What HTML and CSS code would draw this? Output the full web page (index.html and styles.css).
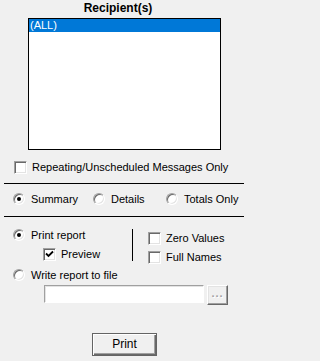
FILE: index.html
```html
<!DOCTYPE html>
<html>
<head>
<meta charset="utf-8">
<link rel="stylesheet" href="styles.css">
</head>
<body>
<div class="dlg">
  <div class="title">Recipient(s)</div>
  <div class="list"><div class="item sel">(ALL)</div></div>
  <div class="opt repeat"><span class="cb"></span><span class="lbl">Repeating/Unscheduled Messages Only</span></div>
  <div class="sep"></div>
  <div class="radios">
    <div class="opt r-sum"><span class="rb on"></span><span class="lbl">Summary</span></div>
    <div class="opt r-det"><span class="rb"></span><span class="lbl">Details</span></div>
    <div class="opt r-tot"><span class="rb"></span><span class="lbl">Totals Only</span></div>
  </div>
  <div class="sep"></div>
  <div class="print-opts">
    <div class="col-left">
      <div class="opt"><span class="rb on"></span><span class="lbl">Print report</span></div>
      <div class="opt preview"><span class="cb"><svg width="11" height="11" viewBox="0 0 11 11"><path d="M2 4.5 L4.5 7 L9 2.5" fill="none" stroke="#000" stroke-width="1.8"/></svg></span><span class="lbl">Preview</span></div>
    </div>
    <div class="vline"></div>
    <div class="col-right">
      <div class="opt zero"><span class="cb"></span><span class="lbl">Zero Values</span></div>
      <div class="opt full"><span class="cb"></span><span class="lbl">Full Names</span></div>
    </div>
  </div>
  <div class="opt write"><span class="rb"></span><span class="lbl">Write report to file</span></div>
  <div class="file-row">
    <div class="input"></div>
    <div class="btn-dots"><span>...</span></div>
  </div>
  <div class="actions"><div class="btn-print">Print</div></div>
</div>
</body>
</html>
```
FILE: styles.css
```css
html, body {
  margin: 0;
  padding: 0;
  background: #f0f0f0;
}
.dlg {
  width: 249px;
  height: 361px;
  background: #f0f0f0;
  font-family: "Liberation Sans", Arial, sans-serif;
  font-size: 11px;
  color: #000;
  overflow: hidden;
}
.title {
  height: 18px;
  line-height: 17px;
  text-align: center;
  font-weight: bold;
  font-size: 12px;
  padding-right: 13px;
}
.list {
  margin-left: 28px;
  width: 193px;
  height: 132px;
  box-sizing: border-box;
  border: 1px solid #000;
  background: #fff;
}
.item {
  height: 13px;
  line-height: 13px;
  padding-left: 1px;
}
.sel {
  background: #0078d7;
  color: #fff;
}
.opt {
  display: flex;
  align-items: center;
  white-space: nowrap;
}
.cb {
  flex: none;
  width: 13px;
  height: 13px;
  box-sizing: border-box;
  border: 1px solid;
  border-color: #a0a0a0 #fff #fff #a0a0a0;
  box-shadow: inset 1px 1px #696969, inset -1px -1px #e3e3e3;
  background: #fff;
  display: flex;
  align-items: center;
  justify-content: center;
}
.cb svg { display: block; }
.rb {
  flex: none;
  position: relative;
  width: 12px;
  height: 12px;
  box-sizing: border-box;
  border-radius: 50%;
  border: 1px solid;
  border-color: #a0a0a0 #fff #fff #a0a0a0;
  box-shadow: inset 1px 1px #696969, inset -1px -1px #e3e3e3;
  background: #fff;
}
.rb.on::after {
  content: "";
  position: absolute;
  left: 3px;
  top: 3px;
  width: 4px;
  height: 4px;
  border-radius: 50%;
  background: #000;
}
.lbl { line-height: 13px; }
.repeat {
  margin-top: 11px;
  margin-left: 14px;
  height: 13px;
}
.repeat .lbl { margin-left: 5px; }
.sep {
  margin-left: 4px;
  width: 240px;
  height: 1px;
  background: #000;
}
.repeat + .sep { margin-top: 9px; }
.radios {
  margin-top: 9px;
  margin-left: 13px;
  height: 12px;
  display: flex;
}
.radios + .sep { margin-top: 11px; }
.radios .opt { height: 12px; }
.radios .lbl, .col-left .lbl, .write .lbl { margin-left: 6px; }
.r-sum { width: 80px; }
.r-det { width: 73px; }
.print-opts {
  margin-top: 12px;
  margin-left: 13px;
  height: 40px;
  display: flex;
  align-items: flex-start;
}
.col-left { width: 119px; }
.col-left > .opt:first-child { height: 12px; }
.preview {
  margin-top: 7px;
  margin-left: 30px;
  height: 13px;
}
.preview .lbl { margin-left: 5px; }
.vline {
  width: 1px;
  height: 32px;
  background: #000;
}
.col-right { padding-left: 15px; }
.col-right .opt { height: 13px; }
.col-right .lbl { margin-left: 5px; }
.zero { margin-top: 3px; }
.full { margin-top: 6px; }
.write {
  margin-left: 13px;
  height: 12px;
}
.file-row {
  margin-top: 4px;
  margin-left: 44px;
  display: flex;
  align-items: flex-start;
}
.input {
  width: 160px;
  height: 18px;
  box-sizing: border-box;
  border: 1px solid;
  border-color: #a0a0a0 #fff #fff #a0a0a0;
  box-shadow: inset 1px 1px #e3e3e3;
  background: #fff;
}
.btn-dots {
  margin-left: 3px;
  width: 21px;
  height: 20px;
  box-sizing: border-box;
  border: 1px solid;
  border-color: #fff #696969 #696969 #fff;
  box-shadow: inset -1px -1px #a0a0a0, inset 1px 1px #e3e3e3;
  background: #f0f0f0;
  color: #a0a0a0;
  font-weight: bold;
  text-align: center;
  line-height: 15px;
  letter-spacing: 1px;
  text-shadow: 1px 1px #fff;
}
.actions {
  margin-top: 28px;
  margin-left: 92px;
}
.btn-print {
  width: 65px;
  height: 23px;
  box-sizing: border-box;
  border: 1px solid #646464;
  box-shadow: inset 1px 1px #fff, inset -1px -1px #696969, inset -2px -2px #a0a0a0;
  background: #f0f0f0;
  text-align: center;
  line-height: 20px;
  font-size: 12px;
}
```
